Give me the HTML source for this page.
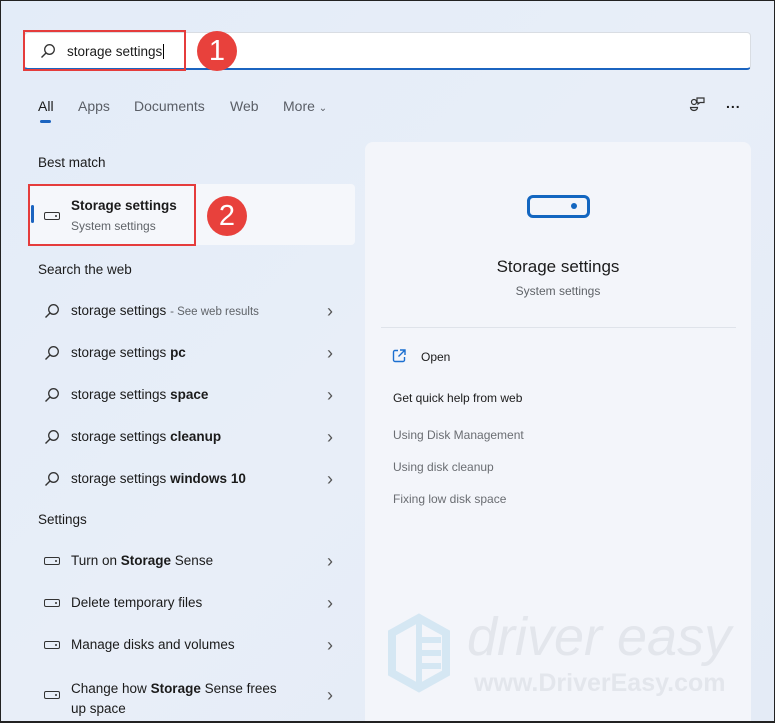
<!DOCTYPE html>
<html><head><meta charset="utf-8"><style>
*{margin:0;padding:0;box-sizing:border-box}
html,body{width:775px;height:723px;overflow:hidden}
body{font-family:"Liberation Sans",sans-serif;color:#1b1b1b;font-size:13px}
#root{position:relative;width:775px;height:723px;overflow:hidden;background:linear-gradient(135deg,#e3ecf8 0%,#e8eef8 50%,#e4ebf6 100%);border:1px solid #222;border-bottom:2px solid #222}
.a{position:absolute;white-space:nowrap}
.search{position:absolute;left:23px;top:31px;width:727px;height:38px;background:#fff;border:1px solid #d9dde3;border-bottom:2px solid #1b64c0;border-radius:4px}
.red{position:absolute;border:2px solid #e53c3c}
.circ{position:absolute;width:40px;height:40px;border-radius:50%;background:#e8413c;color:#fff;font-size:29px;text-align:center;line-height:40px}
.tab{position:absolute;top:97px;font-size:14px;color:#5a5e66}
.hd{position:absolute;left:37px;font-size:13.5px;color:#1b1b1b}
.row{position:absolute;left:70px;font-size:13.5px}
.chev{position:absolute;left:326px;font-size:18px;line-height:16px;color:#555}
.disk{position:absolute;left:43px;width:16px;height:8px;border:1.5px solid #333;border-radius:2px}
.disk:after{content:"";position:absolute;right:2px;top:2px;width:2px;height:2px;background:#333;border-radius:50%}
.panel{position:absolute;left:364px;top:141px;width:386px;height:600px;background:#f3f5fa;border-radius:8px}
.lnk{position:absolute;left:392px;font-size:12px;color:#6a6d72}
</style></head><body><div id="root">
<div class="search"></div>
<svg class="a" style="left:39px;top:42px" width="16" height="16" viewBox="0 0 16 16"><circle cx="9.5" cy="6.5" r="4.8" fill="none" stroke="#333" stroke-width="1.3"/><path d="M6 10L1.5 14.5" stroke="#333" stroke-width="1.4"/></svg>
<div class="a" style="left:66px;top:43px;font-size:13.5px">storage settings<span style="border-left:1px solid #000;margin-left:1px"></span></div>
<div class="red" style="left:22px;top:29px;width:163px;height:41px"></div>
<div class="circ" style="left:196px;top:30px">1</div>

<div class="tab" style="left:37px;color:#1b1b1b">All</div>
<div class="a" style="left:39px;top:119px;width:11px;height:3px;background:#1b64c0;border-radius:2px"></div>
<div class="tab" style="left:77px">Apps</div>
<div class="tab" style="left:133px">Documents</div>
<div class="tab" style="left:229px">Web</div>
<div class="tab" style="left:282px">More <span style="font-size:10px">&#8964;</span></div>
<svg class="a" style="left:688px;top:95px" width="18" height="18" viewBox="0 0 18 18" fill="none" stroke="#333" stroke-width="1.2"><circle cx="5" cy="6" r="2.5"/><path d="M1.5 11.5h7a3.5 3 0 0 1-7 0z"/><path d="M8 2h7v4.5h-4l-2 1.5v-1.5H8z"/></svg>
<div class="a" style="left:725px;top:94px;font-size:14px;font-weight:bold;letter-spacing:1px">...</div>

<div class="hd" style="top:154px">Best match</div>
<div class="a" style="left:29px;top:183px;width:325px;height:61px;background:#f5f7fb;border-radius:4px"></div>
<div class="a" style="left:30px;top:204px;width:3px;height:18px;background:#1b64c0;border-radius:2px"></div>
<div class="disk" style="top:211px"></div>
<div class="a" style="left:70px;top:197px;font-size:13.5px;font-weight:bold">Storage settings</div>
<div class="a" style="left:70px;top:218px;font-size:12px;color:#5f6368">System settings</div>
<div class="red" style="left:27px;top:183px;width:168px;height:62px"></div>
<div class="circ" style="left:206px;top:195px">2</div>

<div class="hd" style="top:261px">Search the web</div>
<svg class="a" style="left:43px;top:302px" width="16" height="16" viewBox="0 0 16 16"><circle cx="9.5" cy="6.5" r="4.8" fill="none" stroke="#333" stroke-width="1.3"/><path d="M6 10L1.5 14.5" stroke="#333" stroke-width="1.4"/></svg>
<div class="row" style="top:302px">storage settings <span style="font-size:11.5px;color:#5f6368">- See web results</span></div><div class="chev" style="top:302px">›</div>
<svg class="a" style="left:43px;top:344px" width="16" height="16" viewBox="0 0 16 16"><circle cx="9.5" cy="6.5" r="4.8" fill="none" stroke="#333" stroke-width="1.3"/><path d="M6 10L1.5 14.5" stroke="#333" stroke-width="1.4"/></svg>
<div class="row" style="top:344px">storage settings <b>pc</b></div><div class="chev" style="top:344px">›</div>
<svg class="a" style="left:43px;top:386px" width="16" height="16" viewBox="0 0 16 16"><circle cx="9.5" cy="6.5" r="4.8" fill="none" stroke="#333" stroke-width="1.3"/><path d="M6 10L1.5 14.5" stroke="#333" stroke-width="1.4"/></svg>
<div class="row" style="top:386px">storage settings <b>space</b></div><div class="chev" style="top:386px">›</div>
<svg class="a" style="left:43px;top:428px" width="16" height="16" viewBox="0 0 16 16"><circle cx="9.5" cy="6.5" r="4.8" fill="none" stroke="#333" stroke-width="1.3"/><path d="M6 10L1.5 14.5" stroke="#333" stroke-width="1.4"/></svg>
<div class="row" style="top:428px">storage settings <b>cleanup</b></div><div class="chev" style="top:428px">›</div>
<svg class="a" style="left:43px;top:470px" width="16" height="16" viewBox="0 0 16 16"><circle cx="9.5" cy="6.5" r="4.8" fill="none" stroke="#333" stroke-width="1.3"/><path d="M6 10L1.5 14.5" stroke="#333" stroke-width="1.4"/></svg>
<div class="row" style="top:470px">storage settings <b>windows 10</b></div><div class="chev" style="top:470px">›</div>

<div class="hd" style="top:511px">Settings</div>
<div class="disk" style="top:556px"></div><div class="row" style="top:552px">Turn on <b>Storage</b> Sense</div><div class="chev" style="top:552px">›</div>
<div class="disk" style="top:598px"></div><div class="row" style="top:594px">Delete temporary files</div><div class="chev" style="top:594px">›</div>
<div class="disk" style="top:640px"></div><div class="row" style="top:636px">Manage disks and volumes</div><div class="chev" style="top:636px">›</div>
<div class="disk" style="top:690px"></div><div class="row" style="top:678px;line-height:20px">Change how <b>Storage</b> Sense frees<br>up space</div><div class="chev" style="top:686px">›</div>

<div class="panel"></div>
<div class="a" style="left:526px;top:194px;width:63px;height:23px;border:3.5px solid #1366c0;border-radius:6px"><div style="position:absolute;right:10px;top:5px;width:6px;height:6px;border-radius:50%;background:#1366c0"></div></div>
<div class="a" style="left:364px;width:386px;top:256px;text-align:center;font-size:17px;color:#1b1b1b">Storage settings</div>
<div class="a" style="left:364px;width:386px;top:283px;text-align:center;font-size:12px;color:#5f6368">System settings</div>
<div class="a" style="left:380px;top:326px;width:355px;height:1px;background:#dfe3ea"></div>
<svg class="a" style="left:391px;top:348px" width="14" height="14" viewBox="0 0 14 14" fill="none" stroke="#1b6fd0" stroke-width="1.4"><path d="M6 1.5H3a1.5 1.5 0 0 0-1.5 1.5v8a1.5 1.5 0 0 0 1.5 1.5h8a1.5 1.5 0 0 0 1.5-1.5V8"/><path d="M8 1h5v5M13 1L6.5 7.5"/></svg>
<div class="a" style="left:420px;top:349px;font-size:12px">Open</div>
<div class="a" style="left:392px;top:390px;font-size:12px">Get quick help from web</div>
<div class="lnk" style="top:427px">Using Disk Management</div>
<div class="lnk" style="top:459px">Using disk cleanup</div>
<div class="lnk" style="top:491px">Fixing low disk space</div>

<svg class="a" style="left:386px;top:612px" width="64" height="80" viewBox="0 0 64 80" fill="none" stroke="#d5e7f3" stroke-width="8"><path d="M32 5L59 20v40L32 75L5 60V20z"/><path d="M32 5v70M32 27h22M32 40h22M32 53h22" stroke-width="6"/></svg>
<div class="a" style="left:466px;top:608px;font-size:54px;line-height:56px;font-style:italic;color:#e3e6ec">driver easy</div>
<div class="a" style="left:473px;top:668px;font-size:25px;font-weight:bold;color:#e3e6ec">www.DriverEasy.com</div>
</div></body></html>
